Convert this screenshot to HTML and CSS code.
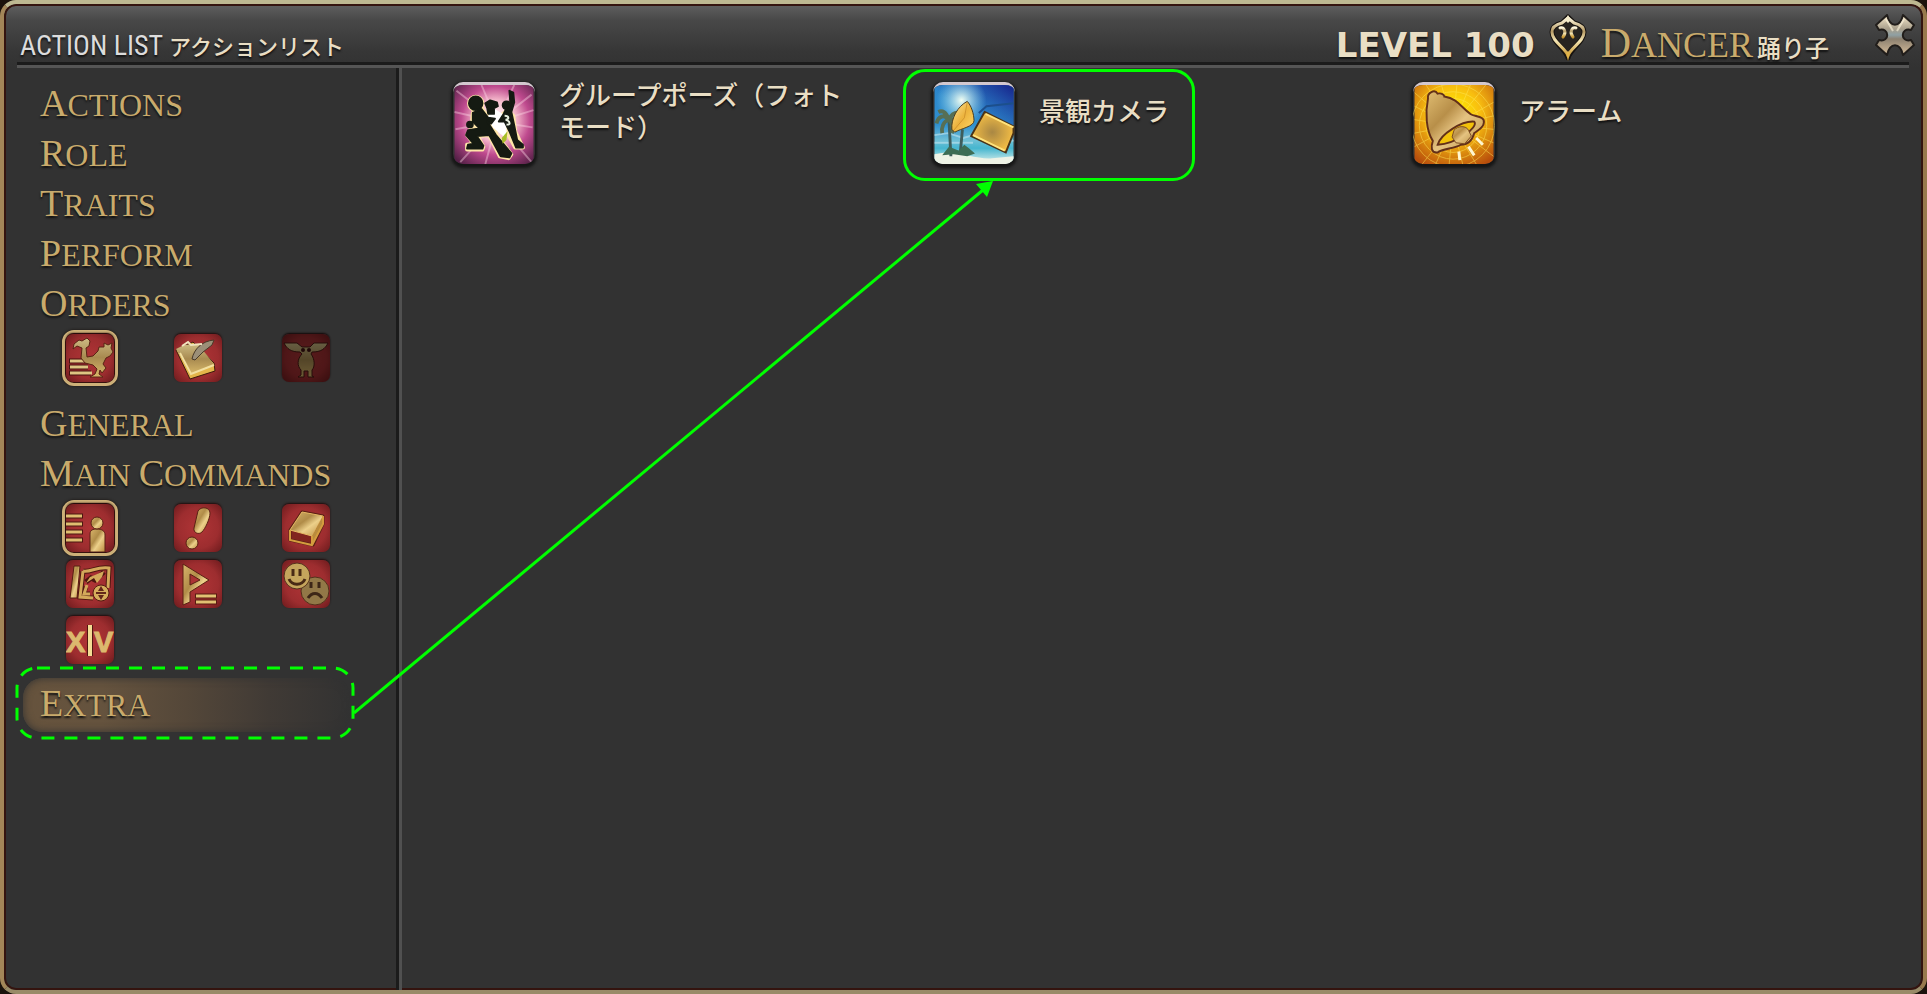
FILE: index.html
```html
<!DOCTYPE html>
<html lang="ja">
<head>
<meta charset="utf-8">
<title>Action List</title>
<link rel="stylesheet" href="styles.css">
</head>
<body>
<svg class="defs" width="0" height="0" aria-hidden="true">
  <defs>
    <linearGradient id="gold" x1="0" y1="0" x2="1" y2="1">
      <stop offset="0" stop-color="#d9b66c"/><stop offset=".4" stop-color="#b08c48"/><stop offset=".6" stop-color="#ecd08a"/><stop offset="1" stop-color="#b8893c"/>
    </linearGradient>
    <linearGradient id="pale" x1="0" y1="0" x2="0" y2="1">
      <stop offset="0" stop-color="#cdbb83"/><stop offset=".5" stop-color="#a88a50"/><stop offset="1" stop-color="#d8b869"/>
    </linearGradient>
    <linearGradient id="emblem" x1="0" y1="0" x2="0" y2="1">
      <stop offset="0" stop-color="#fff8de"/><stop offset=".35" stop-color="#b69a63"/><stop offset=".6" stop-color="#f5e6b4"/><stop offset="1" stop-color="#c8952f"/>
    </linearGradient>
    <linearGradient id="steel" x1="0" y1="0" x2="0" y2="1">
      <stop offset="0" stop-color="#f5e8ca"/><stop offset=".35" stop-color="#a99f8b"/><stop offset=".5" stop-color="#8fa0a4"/><stop offset=".6" stop-color="#8d8170"/><stop offset="1" stop-color="#d6bd9b"/>
    </linearGradient>
    <radialGradient id="pink" cx=".52" cy=".45" r=".7">
      <stop offset="0" stop-color="#fff"/><stop offset=".35" stop-color="#f8c0cf"/><stop offset=".62" stop-color="#bf4a8e"/><stop offset="1" stop-color="#541f46"/>
    </radialGradient>
    <linearGradient id="sky" x1="0" y1="0" x2="0" y2="1">
      <stop offset="0" stop-color="#2c86cc"/><stop offset=".5" stop-color="#2f8fce"/><stop offset=".7" stop-color="#6fc0d6"/><stop offset=".8" stop-color="#45b6cf"/><stop offset="1" stop-color="#e4f4ee"/>
    </linearGradient>
    <radialGradient id="sun"><stop offset="0" stop-color="#f4fff2"/><stop offset="1" stop-color="#8fdcf0" stop-opacity="0"/></radialGradient>
    <linearGradient id="night" x1="0" y1="1" x2="1" y2="0"><stop offset=".45" stop-color="#1a3fa0" stop-opacity="0"/><stop offset="1" stop-color="#17228a"/></linearGradient>
    <linearGradient id="leaf" x1="0" y1="0" x2="1" y2="1"><stop offset="0" stop-color="#ffe9a0"/><stop offset=".5" stop-color="#ecb33d"/><stop offset="1" stop-color="#ffd868"/></linearGradient>
    <radialGradient id="plate"><stop offset="0" stop-color="#a98743"/><stop offset="1" stop-color="#f3bd45"/></radialGradient>
    <radialGradient id="amber" cx=".5" cy=".35" r=".75">
      <stop offset="0" stop-color="#fff200"/><stop offset=".45" stop-color="#f8bd10"/><stop offset="1" stop-color="#b84e0c"/>
    </radialGradient>
    <linearGradient id="bell" x1="0" y1="0" x2="1" y2="1">
      <stop offset="0" stop-color="#e0bd72"/><stop offset=".35" stop-color="#b88f49"/><stop offset=".55" stop-color="#e5c381"/><stop offset="1" stop-color="#c29a50"/>
    </linearGradient>
  </defs>
</svg>

<div class="window">
  <header class="titlebar">
    <div class="heading">
      <h1 class="title">ACTION LIST</h1>
      <span class="subtitle">アクションリスト</span>
    </div>
    <div class="job">
      <span class="level">LEVEL 100</span>
      <svg class="emblem" viewBox="0 0 38 48" aria-hidden="true">
        <g fill="none" stroke-linejoin="round" stroke-linecap="round">
          <path d="M19 44C17 35 3 28 3 18C3 12 9 10 13 9L19 3L25 9C29 10 35 12 35 18C35 28 21 35 19 44Z" fill="#282420" stroke="#171310" stroke-width="5"/>
          <path d="M19 42C17 34 3 28 3 18C3 12 9 10 13 9L19 4L25 9C29 10 35 12 35 18C35 28 21 34 19 42Z" stroke="url(#emblem)" stroke-width="3"/>
          <path d="M14 23C18 18 15 13 11 14M24 23C20 18 23 13 27 14" stroke="url(#emblem)" stroke-width="3"/>
          <path d="M17 39L19 47L21 39L19 37Z" fill="#e0b34a"/>
          <path d="M16 6L19 1L22 6L19 9Z" fill="#f5eccb"/>
        </g>
      </svg>
      <span class="job-name caps"><span class="word">Dancer</span></span>
      <span class="job-local">踊り子</span>
    </div>
    <button class="close" type="button" aria-label="Close">
      <svg viewBox="0 0 40 42" aria-hidden="true">
        <path d="M12 1C15 14 25 14 28 1L39 11L36 16C25 13 25 29 36 26L39 31L28 41C25 28 15 28 12 41L1 31L4 26C15 29 15 13 4 16L1 11Z" fill="url(#steel)" stroke="#211d1a" stroke-width="2" stroke-linejoin="round"/>
        <path d="M11 5L18 17M29 5L22 17" stroke="#fff7df" stroke-width="2" opacity=".6"/>
      </svg>
    </button>
  </header>

  <div class="body">
    <nav class="sidebar">
      <a class="entry caps" href="#actions"><span class="word">Actions</span></a>
      <a class="entry caps" href="#role"><span class="word">Role</span></a>
      <a class="entry caps" href="#traits"><span class="word">Traits</span></a>
      <a class="entry caps" href="#perform"><span class="word">Perform</span></a>
      <a class="entry caps" href="#orders"><span class="word">Orders</span></a>
      <div class="tabs">
        <button class="tab selected" type="button" aria-label="Companion"><svg viewBox="0 0 48 48">
          <path d="M3 27H25M3 33H22M3 39H25" stroke="#46110f" stroke-width="5"/>
          <path d="M4 27H24M4 33H22M4 39H26" stroke="#dec582" stroke-width="3"/>
          <path d="M7 15L8 10L13 6L16 7L21 4L24 7L23 12L20 14L21 23L27 22L32 17L33 13L38 13L38 9L42 11L46 9L45 14L47 18L44 22L40 24L37 30L40 34L36 39L34 36L33 40L37 43L24 43L29 40L31 35L27 31L19 29L15 24L16 14L11 12Z" fill="url(#pale)" stroke="#5a2415"/>
        </svg></button>
        <button class="tab" type="button" aria-label="Pet"><svg viewBox="0 0 48 48">
          <path d="M2 16L19 8L40 29L41 37L16 45Z" fill="#e3b54a" stroke="#3d1a0d"/>
          <path d="M2 15L10 11L24 10L40 30L17 40Z" fill="url(#pale)"/>
          <path d="M6 19L17 40L40 31" fill="none" stroke="#f2dfa0" stroke-width="2"/>
          <path d="M18 25C20 15 28 7 40 6L38 11L29 18L21 26Z" fill="#9b8f78" stroke="#4a3a28"/>
          <path d="M8 12L14 8L17 11L28 10" fill="none" stroke="#efe3bd" stroke-width="2"/>
        </svg></button>
        <button class="tab disabled" type="button" aria-label="Squadron" disabled><svg viewBox="0 0 48 48">
          <path d="M2 9H15L20 13H28L32 9H46C43 15 39 18 30 18L29 20C33 25 33 33 30 36V42L32 43H26V37H22V43H16L19 41V36C15 32 15 25 20 20L18 18C9 18 5 15 2 9Z" fill="url(#pale)" stroke="#4a1a14"/>
          <circle cx="21" cy="16" r="2" fill="#3d1010"/><circle cx="27" cy="16" r="2" fill="#3d1010"/>
        </svg></button>
      </div>
      <a class="entry caps" href="#general"><span class="word">General</span></a>
      <a class="entry caps" href="#main"><span class="word">Main</span> <span class="word">Commands</span></a>
      <div class="tabs">
        <button class="tab selected" type="button" aria-label="Character"><svg viewBox="0 0 48 48">
          <path d="M0 12H17M0 20H17M0 28H17M0 36H17" stroke="#4b1610" stroke-width="5"/>
          <path d="M0 12H16M0 20H16M0 28H16M0 36H16" stroke="#dfbd70" stroke-width="3"/>
          <path d="M24 48V30C24 26 27 25 31 25C36 25 39 27 39 31V48Z" fill="url(#gold)" stroke="#5a2014"/>
          <circle cx="31" cy="19" r="6" fill="url(#gold)" stroke="#5a2014"/>
        </svg></button>
        <button class="tab" type="button" aria-label="Duty"><svg viewBox="0 0 48 48">
          <path d="M24 7C27 2 36 3 36 9C36 15 31 25 28 28C25 31 19 29 20 24Z" fill="url(#gold)" stroke="#5a2014"/>
          <circle cx="18" cy="39" r="6" fill="url(#gold)" stroke="#5a2014"/>
        </svg></button>
        <button class="tab" type="button" aria-label="Logs"><svg viewBox="0 0 48 48">
          <path d="M20 8L41 12L41 20L31 41L8 36L8 26Z" fill="#82251f" stroke="#5a2014" stroke-width="3" stroke-linejoin="round"/>
          <path d="M20 8L41 12L30 32L8 26Z" fill="url(#gold)" stroke="#e7b963" stroke-linejoin="round"/>
          <path d="M30 32L41 12V20L31 41Z" fill="#b98b3d"/>
          <path d="M8 26V36L30 41L41 20V12M30 32V41" fill="none" stroke="#d49c3e" stroke-width="2"/>
        </svg></button>
        <button class="tab" type="button" aria-label="Travel"><svg viewBox="0 0 48 48">
          <path d="M8 6H14L11 38H4Z" fill="url(#gold)" stroke="#561c12"/>
          <path d="M17 11C24 13 31 6 43 8L42 28M17 11L14 37L27 38M20 27L17 34H24M20 22L25 18L29 20L38 12" fill="none" stroke="#4e1710" stroke-width="5"/>
          <path d="M17 11C24 13 31 6 43 8L42 28M17 11L14 37L27 38M21 25L18 34H24" fill="none" stroke="#d3a95a" stroke-width="3"/>
          <path d="M20 23L24 17L29 15L38 11L36 17L31 23L28 18Z" fill="#d3a95a"/>
          <circle cx="35" cy="33" r="8" fill="#d6ad5c" stroke="#541b11"/>
          <path d="M30 33H40" stroke="#63271a" stroke-width="2"/>
          <path d="M32 31L35 26L38 31ZM32 35L35 40L38 35Z" fill="#63271a"/>
        </svg></button>
        <button class="tab" type="button" aria-label="Party"><svg viewBox="0 0 48 48">
          <path d="M9 4L35 20L16 32V42L9 45ZM16 14V25L26 20Z" fill="url(#gold)" fill-rule="evenodd" stroke="#5a2014"/>
          <path d="M21 36H43M21 42H43" stroke="#581a11" stroke-width="5"/>
          <path d="M22 36H42M22 42H42" stroke="#e2c173" stroke-width="3"/>
        </svg></button>
        <button class="tab" type="button" aria-label="Social"><svg viewBox="0 0 48 48">
          <circle cx="33" cy="31" r="14" fill="#927847" stroke="#54301c"/>
          <path d="M29 22V28M37 22V28M26 38C30 32 36 32 40 38" fill="none" stroke="#3d2717" stroke-width="3"/>
          <circle cx="15" cy="16" r="13" fill="#c5a55c" stroke="#54301c"/>
          <path d="M11 9V16M18 9V16M7 19C10 26 20 26 23 19" fill="none" stroke="#492a15" stroke-width="3"/>
        </svg></button>
        <button class="tab" type="button" aria-label="System"><svg viewBox="0 0 48 48">
          <g class="xiv"><text x="0" y="36">X</text><text x="28" y="36">V</text></g>
          <path d="M24 9V40" stroke="#501610" stroke-width="6"/>
          <path d="M24 9V40" stroke="#f3dc94" stroke-width="4"/>
        </svg></button>
      </div>
      <a class="entry caps active" href="#extra" aria-current="page"><span class="word">Extra</span>
        <svg class="dashes" viewBox="0 0 340 74" aria-hidden="true"><rect x="2" y="2" width="336" height="70" rx="20" fill="none" stroke="#0f0" stroke-width="3" stroke-dasharray="13 10"/></svg>
      </a>
    </nav>

    <main class="actions">
      <button class="action" type="button">
        <svg class="art" viewBox="0 0 82 82" aria-hidden="true">
          <rect width="82" height="82" fill="url(#pink)"/>
          <g stroke="#ffdce8" stroke-width="2" opacity=".4"><path d="M44 38L2 6M44 38L6 80M44 38L80 80M44 38L80 10M44 38L32 82M44 38L1 46M44 38L81 44M44 38L28 0M44 38L62 0M44 38L0 28M44 38L82 26"/></g>
          <g stroke="#ffe6a8" stroke-width="4" stroke-linejoin="round" fill="#ffe6a8">
            <path d="M18 40L19 29L29 25L38 38L44 52L59 72L56 76L47 74L36 52L24 53L30 64L29 67H13V62L20 61L13 52L18 44Z"/><circle cx="22" cy="19" r="7"/>
            <path d="M48 32L55 26L61 32L63 48L71 65H63L54 48L46 40Z"/>
          </g>
          <path d="M40 24L50 30L54 42L54 56L40 44L34 34Z" fill="#fff"/>
          <g fill="#151a12" stroke="#151a12" stroke-linejoin="round" stroke-width="2">
            <circle cx="22" cy="19" r="7"/>
            <path d="M19 29L28 25L35 34L42 35L38 40L34 38L43 52L59 71L57 75L48 74L36 52L23 53L30 63L29 66H13L14 62L20 61L12 52L14 47L26 45L19 38Z"/>
            <circle cx="16" cy="41" r="3"/>
            <path d="M32 19L37 16L44 18L45 22L41 24V30H35L34 24Z"/>
            <circle cx="54" cy="21" r="4"/>
            <path d="M58 20L57 6L61 8L62 18L59 28L62 42L65 57L71 62V65H64L57 48L52 38L46 38L51 30L53 26Z"/>
          </g>
          <path d="M52 32C57 32 57 36 53 36C59 38 58 42 54 41" fill="none" stroke="#e8f0e0" stroke-width="2"/>
          <path d="M49 55L55 48L54 57L50 61Z" fill="#a9be28"/>
        </svg>
        <span class="label">グループポーズ（フォトモード）</span>
      </button>
      <button class="action picked" type="button">
        <svg class="art" viewBox="0 0 82 82" aria-hidden="true">
          <rect width="82" height="82" fill="url(#sky)"/>
          <rect width="82" height="58" fill="url(#night)"/>
          <circle cx="28" cy="16" r="26" fill="url(#sun)"/>
          <path d="M46 29L54 22L82 19" fill="none" stroke="#1c4f8c" stroke-width="2"/>
          <path d="M0 52L14 50L30 55L44 51L82 58M0 60H40" stroke="#c3e4ee" stroke-width="2" fill="none" opacity=".6"/>
          <path d="M0 82V72C20 66 44 78 60 76L82 74V82Z" fill="#eef3e6"/>
          <g stroke="#3e5d5c" stroke-width="3" fill="none"><path d="M15 36L17 74M29 46L27 68"/></g>
          <path d="M15 36C10 30 4 32 2 40M15 36C9 38 7 44 8 50M15 36C19 40 20 46 18 50M15 36C22 34 27 38 28 44M15 36C18 29 23 28 27 29M15 36C12 28 8 26 4 28" fill="none" stroke="#566f55" stroke-width="4"/>
          <path d="M8 73L15 64L25 68L31 62L36 66L42 71L34 74L20 72Z" fill="#3d6d55"/>
          <path d="M18 46C17 35 24 22 34 17C38 21 41 30 41 37C41 43 28 45 21 49Z" fill="url(#leaf)" stroke="#49391b"/>
          <path d="M20 47L31 34L34 18" fill="none" stroke="#bb7d20" opacity=".6"/>
          <path d="M52 28L82 43V50L74 70L38 53Z" fill="url(#plate)" stroke="#4a3318" stroke-width="2"/>
          <path d="M53 30L82 44M40 52L73 68" fill="none" stroke="#ffe27b" stroke-width="2"/>
        </svg>
        <span class="label">景観カメラ</span>
      </button>
      <button class="action" type="button">
        <svg class="art" viewBox="0 0 82 82" aria-hidden="true">
          <rect width="82" height="82" fill="url(#amber)"/>
          <g fill="none" stroke="#ffe95a" opacity=".5"><circle cx="40" cy="42" r="28"/><circle cx="40" cy="42" r="35"/><circle cx="40" cy="42" r="43"/>
          <path d="M40 42L0 8M40 42L0 22M40 42L0 36M40 42L0 50M40 42L0 64M40 42L8 82M40 42L22 82M40 42L36 82M40 42L50 82M40 42L64 82M40 42L82 74M40 42L82 60M40 42L82 46M40 42L82 32M40 42L82 18M40 42L74 0M40 42L58 0M40 42L44 0M40 42L28 0M40 42L12 0"/></g>
          <path d="M14 14C13 8 21 4 24 9C28 8 31 10 31 12C45 14 49 24 58 30C62 33 73 32 72 39C72 44 65 48 62 50C60 57 55 62 48 62C42 66 29 66 24 70C17 71 17 64 19 58C12 47 11 29 14 14Z" fill="url(#bell)" stroke="#633019" stroke-width="2"/>
          <path d="M24 62C27 51 49 37 62 38C67 44 43 61 24 62Z" fill="#f2c10a" stroke="#633019" stroke-width="2"/>
          <path d="M41 47C45 42 54 42 56 47L59 53L52 61L43 60L39 54Z" fill="url(#bell)" stroke="#7a4a20"/>
          <path d="M64 55L71 62M56 64L62 73M46 69L47 78" stroke="#fff6d0" stroke-width="3"/>
        </svg>
        <span class="label">アラーム</span>
      </button>
    </main>
  </div>

  <svg class="arrow" width="640" height="534" viewBox="0 0 640 534" aria-hidden="true">
    <path d="M1 533L630 10" stroke="#0f0" stroke-width="3"/>
    <path d="M640 1L623 4L634 17Z" fill="#0f0"/>
  </svg>
</div>
</body>
</html>
```
FILE: styles.css
```css
*, *::after { box-sizing: border-box; }

body {
  margin: 0;
  background: #1b120c;
  color: #e9dec4;
  font-family: "Liberation Sans", "Noto Sans CJK JP", sans-serif;
}

button {
  padding: 0;
  border: 0;
  background: none;
  color: inherit;
  font: inherit;
  text-align: left;
  cursor: pointer;
}

.defs { position: absolute; }

.window {
  position: relative;
  display: flex;
  flex-direction: column;
  min-height: 100vh;
  border: 4px solid;
  border-color: #bdb891 #98794d #998b68 #a38658;
  border-radius: 16px;
  background: linear-gradient(#606060, #484848 16px, #363636 48px, #323232 64px);
  box-shadow: inset 0 0 0 2px #34140f;
}

.titlebar {
  display: flex;
  align-items: center;
  height: 64px;
  margin: 0 14px 0 13px;
  border-bottom: 3px solid #555;
  box-shadow: inset 0 -3px 0 #1b1b1b;
}

.heading, .job { display: flex; align-items: baseline; }
.heading { gap: 6px; padding: 22px 0 0 3px; }

.title {
  margin: 0;
  color: #dcdcdc;
  font-family: "Roboto Condensed", "Noto Sans CJK JP", sans-serif;
  font-size: 28px;
  font-weight: 400;
  line-height: 40px;
  text-shadow: 0 2px 2px #111;
}

.subtitle, .job-local, .label {
  font-family: "Noto Sans CJK JP", sans-serif;
  font-weight: 500;
  text-shadow: 0 2px 2px #111;
}
.subtitle { font-size: 22px; line-height: 32px; }

.job { margin-left: auto; padding-top: 18px; }

.level {
  font-family: "DejaVu Sans", sans-serif;
  font-size: 34px;
  font-weight: 700;
  line-height: 40px;
  text-shadow: 0 2px 2px #111;
}

.emblem { align-self: center; width: 38px; height: 48px; margin: -12px 14px 0; }
.job-local { margin-left: 4px; font-size: 24px; line-height: 32px; }

.close { width: 40px; height: 42px; margin: 0 -6px 0 46px; }
.close svg { display: block; }

.caps {
  color: #c9ab6c;
  font-family: "Liberation Serif", serif;
  font-size: 32px;
  text-transform: uppercase;
  text-shadow: 0 2px 2px #111;
}
.word { display: inline-block; }
.word::first-letter { font-size: 38px; }
.job-name { font-size: 36px; line-height: 44px; }
.job-name .word::first-letter { font-size: 42px; }

.body { display: flex; flex: 1; }

.sidebar {
  width: 398px;
  padding: 10px 48px 0 19px;
  border-right: 3px solid #505050;
  box-shadow: inset -3px 0 0 #1b1b1b;
}

.entry {
  position: relative;
  display: block;
  height: 50px;
  padding-left: 17px;
  line-height: 50px;
  text-decoration: none;
  white-space: nowrap;
}

.active {
  height: 54px;
  margin-top: -2px;
  border-radius: 20px;
  background: linear-gradient(90deg, #66533d 0, #65533e 24%, #544739 50%, #403a35 75%, #323232);
  box-shadow: inset 0 0 8px #323232;
}
.dashes {
  position: absolute;
  top: -12px;
  left: -8px;
  width: 340px;
  height: 74px;
}

.tabs {
  display: grid;
  grid-template-columns: repeat(3, 56px);
  column-gap: 52px;
  margin: 0 0 12px 39px;
  padding-top: 2px;
}

.tab {
  width: 56px;
  height: 56px;
  padding: 1px;
  border: 3px solid transparent;
  border-radius: 12px;
}
.tab svg {
  display: block;
  width: 48px;
  height: 48px;
  border-radius: 7px;
  background: radial-gradient(#b03436, #9d2d2f 60%, #6b1a1c);
  box-shadow: 0 -1px 2px #220b0b;
}
.selected { border-color: #cdb078; background: #38120f; box-shadow: 0 0 3px #16100c; }
.disabled { filter: brightness(0.5); }

.xiv text {
  fill: #dcb96e;
  stroke: #dcb96e;
  font-family: "Liberation Sans", sans-serif;
  font-size: 29px;
  font-weight: 700;
}

.actions {
  display: grid;
  flex: 1;
  grid-template-columns: repeat(3, 1fr);
  align-content: start;
  padding: 14px 30px 0 51px;
}

.action { position: relative; display: flex; align-items: flex-start; gap: 24px; }

.art {
  flex: none;
  width: 82px;
  height: 82px;
  border-top: 3px solid #d3c8cf;
  border-radius: 10px;
  box-shadow: 0 2px 3px 2px #161616;
}

.label {
  display: flex;
  align-items: center;
  max-width: 290px;
  min-height: 66px;
  margin-top: -5px;
  font-size: 26px;
  line-height: 32px;
}

.picked::after {
  content: "";
  position: absolute;
  top: -13px;
  left: -30px;
  width: 292px;
  height: 112px;
  border: 3px solid #0f0;
  border-radius: 22px;
}

.arrow { position: absolute; top: 176px; left: 349px; pointer-events: none; }
```
